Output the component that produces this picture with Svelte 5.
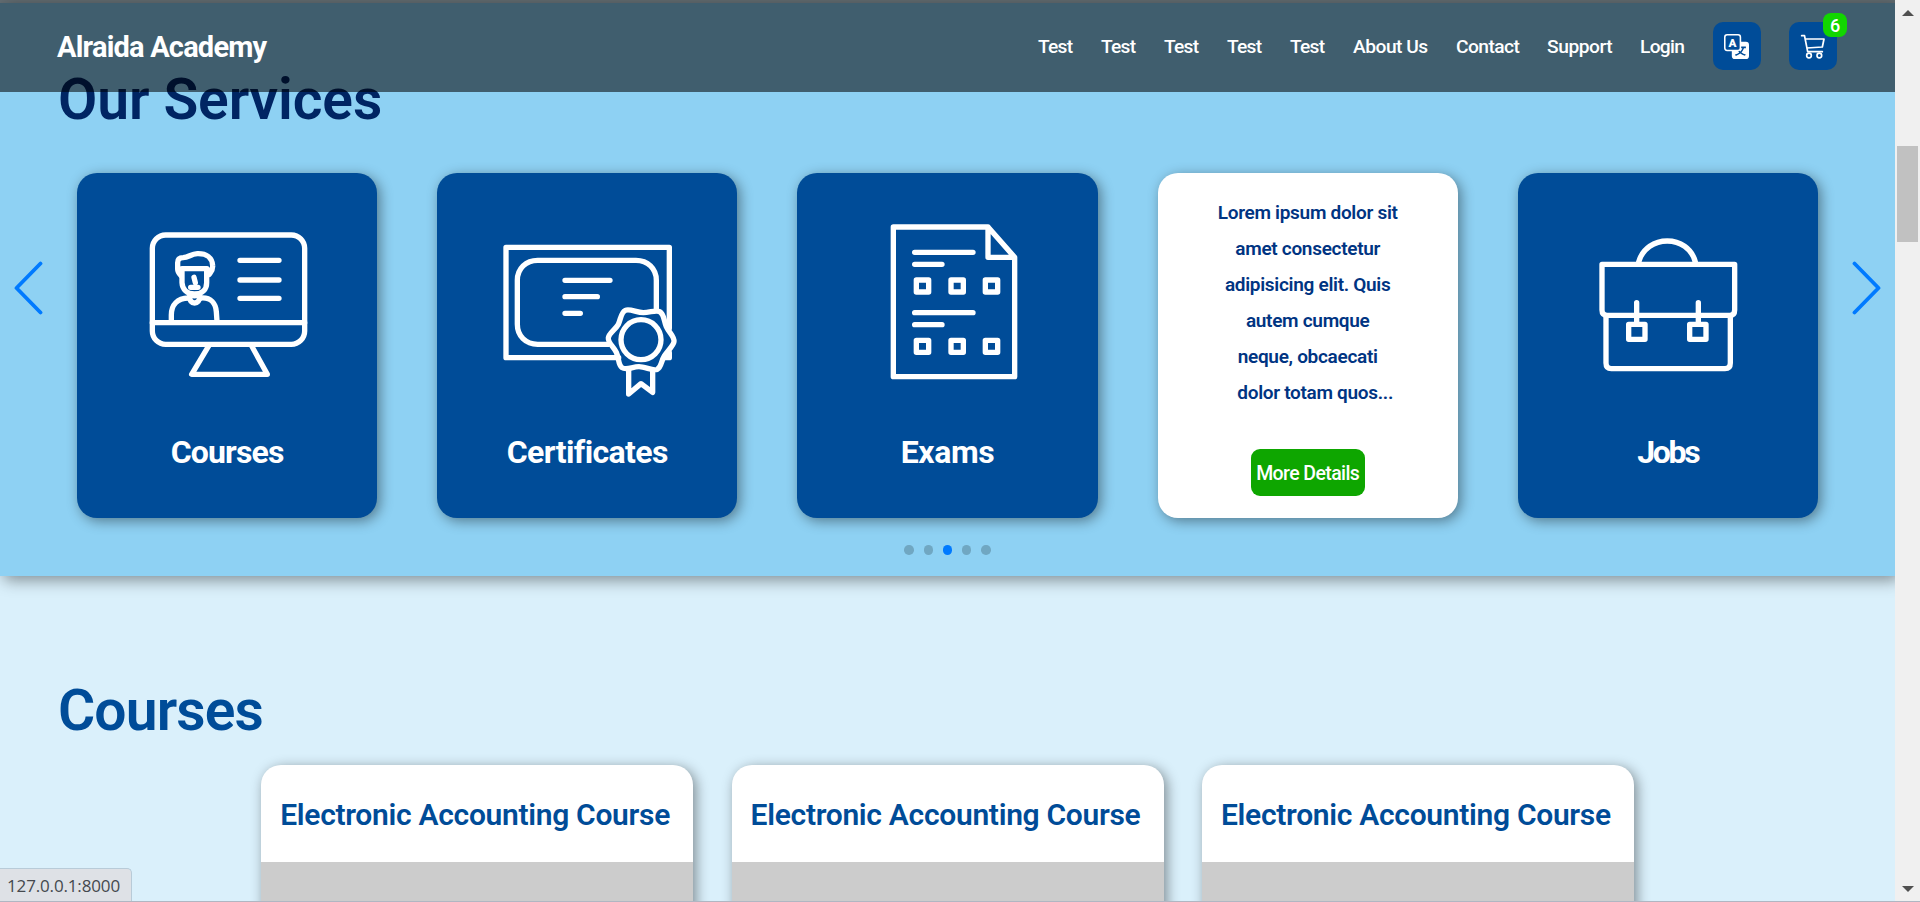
<script>
  const links = [
    { label: 'Test', width: 34, ls: -0.75 },
    { label: 'Test', width: 34, ls: -0.75 },
    { label: 'Test', width: 34, ls: -0.75 },
    { label: 'Test', width: 34, ls: -0.75 },
    { label: 'Test', width: 34, ls: -0.75 },
    { label: 'About Us', width: 74, ls: -0.5 },
    { label: 'Contact', width: 62, ls: -0.55 },
    { label: 'Support', width: 64, ls: -0.45 },
    { label: 'Login', width: 44, ls: -0.7 }
  ];
  const services = [
    { name: 'Courses', icon: 'monitor', ls: -0.85 },
    { name: 'Certificates', icon: 'certificate', ls: -0.6 },
    { name: 'Exams', icon: 'exam', ls: -0.4 },
    { name: '', icon: '', ls: 0 },
    { name: 'Jobs', icon: 'briefcase', ls: -2.3 }
  ];
  const blurb = [
    'Lorem ipsum dolor sit',
    'amet consectetur',
    'adipisicing elit. Quis',
    'autem cumque',
    'neque, obcaecati',
    'dolor totam quos...'
  ];
  const courses = [1, 2, 3];
  const activeDot = 2;
</script>

<div class="window">
  <div class="page">
    <header class="navbar">
      <div class="brand">Alraida Academy</div>
      <nav>
        {#each links as link}
          <a href="#top" style="width:{link.width}px;letter-spacing:{link.ls}px">{link.label}</a>
        {/each}
      </nav>
      <button class="tool" aria-label="Language">
        <svg class="translate" viewBox="0 0 16 16" width="25" height="25">
          <path fill="#fff" fill-rule="evenodd" d="M0 2a2 2 0 0 1 2-2h7a2 2 0 0 1 2 2v3h3a2 2 0 0 1 2 2v7a2 2 0 0 1-2 2H7a2 2 0 0 1-2-2v-3H2a2 2 0 0 1-2-2V2zm2-1a1 1 0 0 0-1 1v7a1 1 0 0 0 1 1h7a1 1 0 0 0 1-1V2a1 1 0 0 0-1-1H2zm7.138 9.995c.193.301.402.583.63.846-.748.575-1.673 1.001-2.768 1.292.178.217.451.635.555.867 1.125-.359 2.08-.844 2.886-1.494.777.665 1.739 1.165 2.93 1.472.133-.254.414-.673.629-.89-1.125-.253-2.057-.694-2.82-1.284.681-.747 1.222-1.651 1.621-2.757H14V8h-3v1.047h.765c-.318.844-.74 1.546-1.272 2.13a6.066 6.066 0 0 1-.415-.492 1.988 1.988 0 0 1-.94.31z" />
          <text x="5.5" y="8" text-anchor="middle" class="glyph">A</text>
        </svg>
      </button>
      <button class="tool" aria-label="Cart">
        <svg class="cart" viewBox="258 27 72 72" width="24" height="24" fill="none" stroke="#fff" stroke-linecap="round" stroke-linejoin="round">
          <path stroke-width="5.2" d="M260 32h8.500l9.500 48h44M271 42h56l-5 24-46 3" />
          <circle cx="282" cy="91.500" r="7" stroke-width="5" />
          <circle cx="313" cy="91.500" r="7" stroke-width="5" />
        </svg>
        <span class="badge">6</span>
      </button>
    </header>

    <section class="services">
      <h2 class="ours">Our Services</h2>
      <div class="slider">
        <svg class="arrow" viewBox="0 0 30 54" width="30" height="54"><path d="M26.500 2.500 2.500 27l24 24.500" /></svg>
        <div class="slides">
          {#each services as s}
            <article class="card" class:flipped={!s.name}>
              {#if s.name}
                <svg class="picture" viewBox="{s.icon === 'exam' ? 52 : s.icon === 'briefcase' ? 52 : 50} {s.icon === 'briefcase' ? 219 : 129} 900 660" width="300" height="220">
                  {#if s.icon === 'monitor'}
                    <rect x="276" y="225" width="457" height="328" rx="40" />
                    <path d="M276 488H733M446 556 394 643H621L573 556M539 301H656M539 360H656M539 415H656" />
                    <path d="M333 484V465C333 434 351 415 384 414M423 414C452 412 466 431 468 455L470 484" />
                    <path d="M352 326V308C352 298 358 293 368 293C386 292 391 282 411 281C438 280 456 293 457 317C458 331 451 337 447 343M352 324C351 334 356 341 362 347M365 326H440" />
                    <path d="M365 328V368C366 388 380 402 402 402C426 402 439 388 439 368V328" />
                    <path d="M388 408C385 436 420 436 418 408M390 403C396 409 409 409 416 402" />
                    <path d="M401 352 405 368M391 382H413" />
                  {:else if s.icon === 'certificate'}
                    <path d="M595 593H257V262H747V505M735 593H747V578" />
                    <path d="M565 553H352C316 553 291 528 291 493V361C291 326 317 301 352 301H647C682 301 708 326 708 361V447" />
                    <path d="M434 361H569M434 410H531M434 460H480" />
                    <circle cx="662" cy="539" r="60" />
                    <path d="M615 451C629 445 649 458 669 458C689 458 706 449 718 455C732 463 730 481 738 500C746 518 763 530 761 545C759 558 742 572 732 588C721 606 724 620 711 628C699 634 675 620 656 620C636 620 618 632 605 623C593 614 597 597 588 577C580 560 563 549 564 534C565 520 585 509 594 493C602 475 602 457 615 451Z" />
                    <path d="M625 628V702L662 671 697 697V633" />
                  {:else if s.icon === 'exam'}
                    <path d="M338 201H622L702 292V650H338ZM622 201V292H702" />
                    {#each [0, 181] as dy}
                      <path d="M402 {277 + dy}H577M402 {313 + dy}H484" />
                      {#each [407, 511, 614] as x}
                        <rect {x} y={360 + dy} width="37" height="36" />
                      {/each}
                    {/each}
                  {:else}
                    <path d="M304 403H702V540Q702 556 688 556H320Q304 556 304 540ZM414 396C437 312 563 312 584 396" />
                    <path d="M316 560V699Q316 716 332 716H673Q689 716 689 699V560M408 518V580M593 518V580" />
                    <rect x="384" y="583" width="49" height="45" />
                    <rect x="567" y="583" width="49" height="45" />
                  {/if}
                </svg>
                <h3 style="letter-spacing:{s.ls}px">{s.name}</h3>
              {:else}
                <p>
                  {#each blurb as line}<span>{line}</span>{/each}
                </p>
                <button class="more">More Details</button>
              {/if}
            </article>
          {/each}
        </div>
        <svg class="arrow" viewBox="0 0 30 54" width="30" height="54"><path d="M3.500 2.500l24 24.500-24 24.500" /></svg>
      </div>
      <div class="dots">
        {#each services as s, i}<i class:on={i === activeDot}></i>{/each}
      </div>
    </section>

    <section class="courses">
      <h2>Courses</h2>
      <div class="list">
        {#each courses as c}
          <article class="course">
            <h4>Electronic Accounting Course</h4>
            <div class="thumb"></div>
          </article>
        {/each}
      </div>
    </section>

    <div class="status">127.0.0.1:8000</div>
  </div>

  <div class="scrollbar">
    <svg viewBox="0 0 12 6" width="12" height="6"><path d="M6 0l6 6H0z" /></svg>
    <div class="handle"></div>
    <svg class="down" viewBox="0 0 12 6" width="12" height="6"><path d="M0 0h12L6 6z" /></svg>
  </div>
</div>

<style>
  :global(body) { margin: 0; overflow: hidden; }
  * { box-sizing: border-box; }
  h2, h3, h4, p { margin: 0; }
  button { border: 0; padding: 0; font: inherit; color: inherit; }
  .window {
    display: flex; height: 902px; overflow: hidden; position: relative;
    font-family: Roboto, "Open Sans", sans-serif;
    border-bottom: 1px solid #b0b6c2;
  }
  .page { position: relative; width: 1895px; padding-top: 3px; background: #daf0fb; overflow: hidden; }

  .navbar {
    position: absolute; z-index: 5; top: 0; left: 0; width: 100%; height: 92px;
    padding: 0 58px 0 57px; display: flex; align-items: center;
    background: rgba(0, 0, 0, .55); color: #fff;
  }
  .brand { font-size: 29px; font-weight: 700; letter-spacing: -.8px; line-height: 40px; margin-right: auto; padding-top: 2px; }
  nav { display: flex; gap: 29px; margin-right: 29px; }
  nav a { color: #fff; font-size: 19.200px; font-weight: 500; line-height: 30px; white-space: nowrap; text-decoration: none; padding-top: 1px; }
  .tool {
    position: relative; width: 48px; height: 48px; border-radius: 10px; background: #004c98;
    display: flex; align-items: center; justify-content: center;
  }
  .tool + .tool { margin-left: 28px; }
  .tool svg { overflow: visible; }
  .translate { margin-right: 1px; }
  .glyph { font: 900 7.500px Roboto, sans-serif; fill: #fff; }
  .badge {
    position: absolute; right: -10px; top: -9px; width: 24px; height: 24px; border-radius: 8px;
    background: #12d600; font-size: 18px; font-weight: 500; line-height: 25px; text-align: center;
  }

  h2 { font-size: 57px; line-height: 60px; font-weight: 600; }
  .services {
    position: relative; height: 573px; padding-top: 67px; background: #8ed1f3;
    box-shadow: 4px 4px 15px rgba(0, 0, 0, .42);
  }
  .ours { padding-left: 58px; color: #002563; letter-spacing: -.1px; }
  .slider { display: flex; align-items: flex-start; justify-content: space-between; padding: 43px 14px 0 14px; }
  .arrow { margin-top: 88px; fill: none; stroke: #007aff; stroke-width: 3.800; stroke-linecap: round; stroke-linejoin: round; }
  .slides { display: flex; gap: 60px; }
  .card {
    width: 300.200px; height: 345px; border-radius: 20px; background: #004c98; color: #fff;
    box-shadow: 3px 3px 13px rgba(0, 0, 0, .42);
    display: flex; flex-direction: column; align-items: center; padding-top: 30px;
  }
  .picture { fill: none; stroke: #fff; stroke-width: 16; stroke-linecap: round; stroke-linejoin: round; }
  h3 { font-size: 32px; line-height: 40px; font-weight: 700; margin-top: 9px; }
  .flipped { background: #fff; padding-top: 22px; }
  .flipped p { color: #003482; font-size: 19px; font-weight: 600; line-height: 36px; letter-spacing: -.3px; text-align: center; }
  .flipped span { display: block; }
  .flipped span:last-child { padding-left: 15px; }
  .more {
    margin-top: 38px; padding-top: 1px; width: 114px; height: 47px; border-radius: 9px; background: #0ea600;
    color: #fff; font-size: 19.500px; font-weight: 500; letter-spacing: -.6px;
  }
  .dots { display: flex; justify-content: center; gap: 9.600px; margin-top: 27px; }
  .dots i { width: 9.600px; height: 9.600px; border-radius: 50%; background: #70a7c2; }
  .dots .on { background: #007aff; }

  .courses { padding: 105px 0 0 58px; }
  .courses h2 { color: #004c98; letter-spacing: -.9px; }
  .list { display: flex; gap: 38.400px; margin-top: 24px; padding-left: 203.200px; }
  .course { width: 432px; height: 300px; flex: none; border-radius: 20px; background: #fff; overflow: hidden; box-shadow: 3px 3px 13px rgba(0, 0, 0, .42); }
  h4 { margin: 0; height: 97px; padding-left: 19px; font-size: 30px; font-weight: 600; line-height: 99px; letter-spacing: -.3px; color: #004c98; white-space: nowrap; }
  .thumb { height: 203px; background: #ccc; }

  .status {
    position: absolute; left: 0; bottom: 0; width: 132px; height: 33px; padding-left: 7px;
    background: #dee1e6; border: solid #b8cbd8; border-width: 1px 1px 0 0; border-top-right-radius: 5px;
    color: #45494e; font: 17px/33px "Open Sans", sans-serif; letter-spacing: -.15px;
  }
  .scrollbar { width: 25px; background: #f0f0f0; display: flex; flex-direction: column; align-items: center; padding: 10px 0 9px; }
  .scrollbar path { fill: #505050; }
  .handle { width: 21px; height: 96px; margin-top: 130px; background: #c1c1c1; }
  .down { margin-top: auto; }
</style>
